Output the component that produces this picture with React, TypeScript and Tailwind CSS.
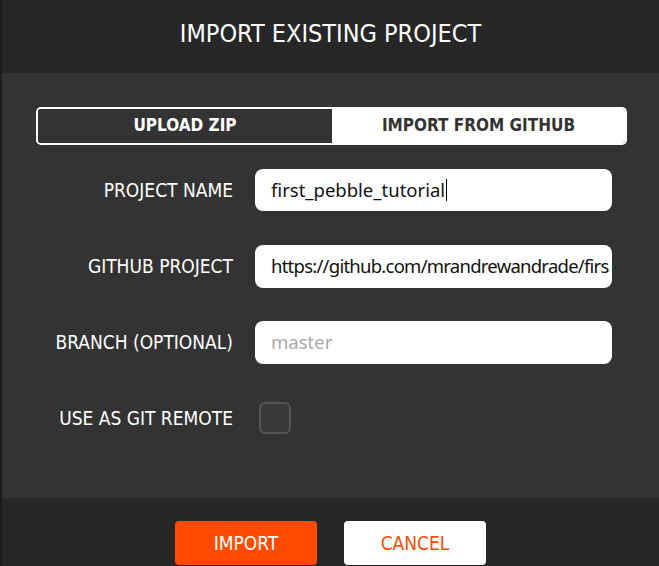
import React from "react";

const narrow = { fontFamily: '"Liberation Sans Narrow", "DejaVu Sans Condensed", "Liberation Sans", sans-serif' };
const inputFont = { fontFamily: '"Noto Sans", sans-serif' };

function Row({ label, children }: { label: string; children: React.ReactNode }) {
  return (
    <div className="flex h-[42px] items-center">
      <div className="w-[231px] shrink-0 text-right text-[19px] leading-none text-white" style={narrow}>
        {label}
      </div>
      <div className="ml-[22px] min-w-0 flex-1">{children}</div>
    </div>
  );
}

export default function App() {
  return (
    <div className="flex h-[566px] w-[659px] overflow-hidden bg-[#1c1c1c]">
      <div className="ml-[2px] flex flex-1 flex-col bg-[#333333]">
        <div className="flex h-[73px] items-center justify-center bg-[#272727] pb-[6px]">
          <h1 className="text-[25px] leading-none text-white" style={narrow}>
            IMPORT EXISTING PROJECT
          </h1>
        </div>
        <div className="flex-1 pt-[34px]">
          <div className="ml-[34px] flex h-[38px] w-[591px] overflow-hidden rounded-[5px] border-2 border-white">
            <div className="flex w-[294px] items-center justify-center bg-[#333333] text-[17px] font-bold text-white" style={narrow}>
              UPLOAD ZIP
            </div>
            <div className="flex flex-1 items-center justify-center bg-white text-[17px] font-bold text-[#333333]" style={narrow}>
              IMPORT FROM GITHUB
            </div>
          </div>
          <div className="mt-[24px] flex w-[610px] flex-col gap-[34px]">
            <Row label="PROJECT NAME">
              <div className="flex h-[42px] items-center overflow-hidden rounded-[8px] bg-white pl-[16px] text-[18.5px] text-[#111]" style={inputFont}>
                <span>first_pebble_tutorial</span>
                <span className="ml-[1px] h-[22px] w-[1px] bg-black" />
              </div>
            </Row>
            <Row label="GITHUB PROJECT">
              <div className="flex h-[43px] w-full items-center overflow-hidden whitespace-nowrap rounded-[8px] bg-white pl-[16px] text-[18.5px] tracking-[-0.75px] text-[#111]" style={inputFont}>
                <span>https://github.com/mrandrewandrade/firs</span>
              </div>
            </Row>
            <Row label="BRANCH (OPTIONAL)">
              <div className="flex h-[43px] items-center overflow-hidden rounded-[8px] bg-white pl-[16px] text-[18.5px] text-[#aaaaaa]" style={inputFont}>
                master
              </div>
            </Row>
            <Row label="USE AS GIT REMOTE">
              <div className="ml-[4px] h-[32px] w-[32px] rounded-[6px] border-2 border-[#555555] bg-[#3a3a3a]" />
            </Row>
          </div>
        </div>
        <div className="flex h-[68px] justify-center gap-[27px] bg-[#272727] pt-[23px]">
          <div className="flex h-[44px] w-[142px] items-center justify-center rounded-[4px] bg-[#ff4a00] text-[19px] text-white" style={narrow}>
            IMPORT
          </div>
          <div className="flex h-[44px] w-[142px] items-center justify-center rounded-[4px] bg-white text-[19px] text-[#ff4a00]" style={narrow}>
            CANCEL
          </div>
        </div>
      </div>
    </div>
  );
}
